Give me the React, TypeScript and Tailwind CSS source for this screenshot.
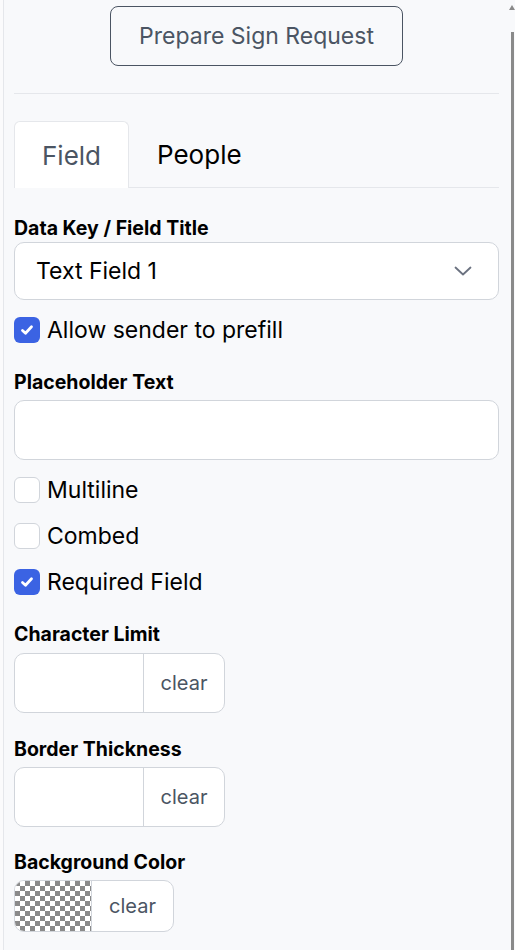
import React from "react";

function Check({ checked, label }: { checked: boolean; label: string }) {
  return (
    <div className="flex items-center gap-[7px] h-[26px]">
      {checked ? (
        <div className="w-[26px] h-[26px] rounded-[6px] bg-[#3b63e3] flex items-center justify-center">
          <svg width="16" height="16" viewBox="0 0 16 16" fill="none">
            <path d="M3.5 8.5 L6.5 11.2 L12.5 4.8" stroke="white" strokeWidth="2.8" strokeLinecap="round" strokeLinejoin="round" />
          </svg>
        </div>
      ) : (
        <div className="w-[26px] h-[26px] rounded-[6px] bg-white border border-[#d1d5db]" />
      )}
      <span className="text-[23px] leading-[26px] text-black">{label}</span>
    </div>
  );
}

function Label({ children, className }: { children: React.ReactNode; className: string }) {
  return <div className={"text-[19.5px] leading-[24px] font-bold text-black " + className}>{children}</div>;
}

function ClearGroup({ className }: { className: string }) {
  return (
    <div className={"flex w-[211px] h-[60px] bg-white border border-[#d1d5db] rounded-[10px] overflow-hidden " + className}>
      <div className="w-[129px] border-r border-[#d1d5db]" />
      <div className="flex-1 flex items-center justify-center text-[20px] text-[#4b5563]">clear</div>
    </div>
  );
}

export default function App() {
  return (
    <div className="relative h-[950px] w-full bg-[#fbfbfc] overflow-hidden" style={{ fontFamily: "Inter, 'Noto Sans', sans-serif" }}>
      <div className="ml-[3px] mr-[16px] h-full border-l border-[#e5e7eb] bg-[#f8f9fb] pl-[10px] pr-[0px]">
        <div className="flex flex-col">
          <div className="flex justify-center pt-[6px]">
            <div className="w-[293px] h-[60px] border border-[#4b5563] rounded-[8px] flex items-center justify-center text-[23px] text-[#4b5563]">
              Prepare Sign Request
            </div>
          </div>
          <div className="mt-[27px] h-px bg-[#e5e7eb]" />
          <div className="mt-[27px] flex border-b border-[#e5e7eb]">
            <div className="w-[115px] h-[67px] -mb-px bg-white border border-b-0 border-[#e5e7eb] rounded-t-[6px] flex items-center justify-center text-[26px] text-[#4b5563]">
              Field
            </div>
            <div className="px-[28px] h-[66px] flex items-center text-[26px] text-black">People</div>
          </div>

          <Label className="mt-[28px]">Data Key / Field Title</Label>
          <div className="mt-[2px] h-[58px] bg-white border border-[#d1d5db] rounded-[10px] flex items-center justify-between pl-[21px] pr-[26px]">
            <span className="text-[23px] text-black">Text Field 1</span>
            <svg width="18" height="10" viewBox="0 0 18 10" fill="none">
              <path d="M1.5 1.5 L9 8.5 L16.5 1.5" stroke="#6b7280" strokeWidth="1.8" strokeLinecap="round" strokeLinejoin="round" />
            </svg>
          </div>

          <div className="mt-[17px]">
            <Check checked label="Allow sender to prefill" />
          </div>

          <Label className="mt-[27px]">Placeholder Text</Label>
          <div className="mt-[6px] h-[60px] bg-white border border-[#d1d5db] rounded-[10px]" />

          <div className="mt-[17px]">
            <Check checked={false} label="Multiline" />
          </div>
          <div className="mt-[20px]">
            <Check checked={false} label="Combed" />
          </div>
          <div className="mt-[20px]">
            <Check checked label="Required Field" />
          </div>

          <Label className="mt-[27px]">Character Limit</Label>
          <ClearGroup className="mt-[7px]" />

          <Label className="mt-[24px]">Border Thickness</Label>
          <ClearGroup className="mt-[6px]" />

          <Label className="mt-[23px]">Background Color</Label>
          <div className="mt-[6px] flex w-[160px] h-[52px] bg-white border border-[#d1d5db] rounded-[10px] overflow-hidden">
            <svg width="77" height="52" className="block border-r border-[#d1d5db]">
              <defs>
                <pattern id="chk" width="10" height="10" patternUnits="userSpaceOnUse">
                  <rect width="10" height="10" fill="#ffffff" />
                  <rect width="5" height="5" fill="#8a8a8a" />
                  <rect x="5" y="5" width="5" height="5" fill="#8a8a8a" />
                </pattern>
              </defs>
              <rect width="77" height="52" fill="url(#chk)" />
            </svg>
            <div className="flex-1 flex items-center justify-center text-[20px] text-[#4b5563]">clear</div>
          </div>
        </div>
      </div>
      <div className="absolute right-0 top-0 h-full w-[16px] bg-[#f8f9fb]">
        <svg width="6" height="6" viewBox="0 0 6 6" className="absolute left-[10px] top-[4px]">
          <path d="M0 6 L3 1 L6 6 Z" fill="#8a8a8a" />
        </svg>
        <div className="absolute left-[12px] top-[32px] bottom-0 w-[3px] bg-[#8a8a8a]" />
      </div>
    </div>
  );
}
